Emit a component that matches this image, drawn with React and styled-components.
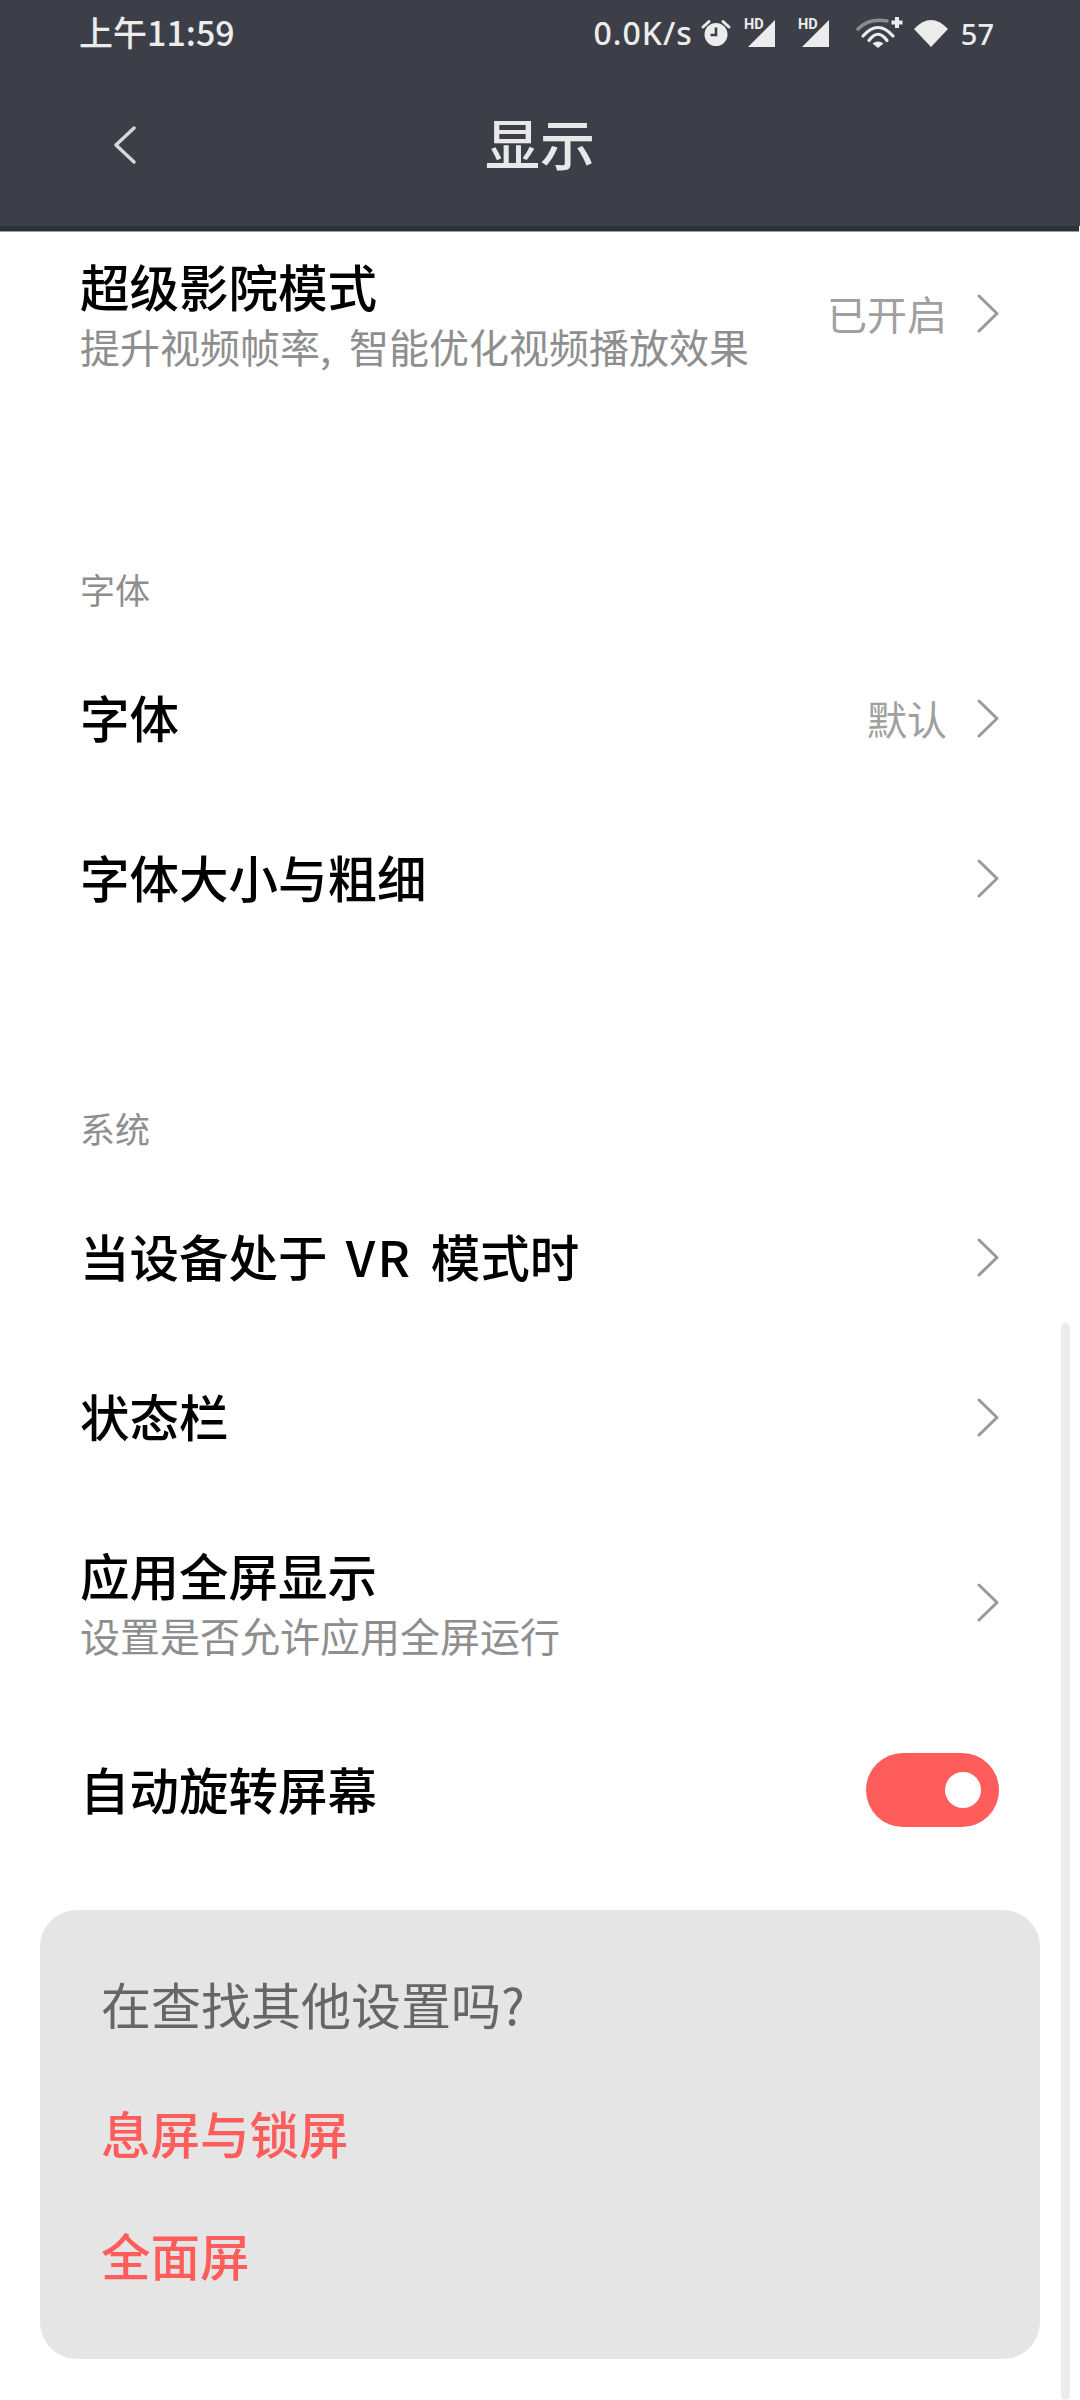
import React from "react";
import styled, { createGlobalStyle } from "styled-components";

const Global = createGlobalStyle`
  html, body { margin: 0; padding: 0; background: #fff; }
  body { font-family: "Noto Sans CJK SC", "Noto Sans", sans-serif; }
`;
const Page = styled.div`
  position: relative;
  width: 1080px;
  height: 2400px;
  overflow: hidden;
  background: #fff;
`;
const Header = styled.header`
  height: 226px;
  background: #3c3f48;
  display: flex;
  flex-direction: column;
`;
const HeaderEdge = styled.div`
  height: 5px;
  margin-right: 1px;
  background: #2a3339;
  border-bottom: 1px solid #9aa0a0;
`;
const StatusBar = styled.div`
  height: 66px;
  display: flex;
  align-items: center;
  padding: 0 86px 0 79px;
  color: #ececec;
`;
const Clock = styled.span`
  font-size: 34px;
  font-weight: 500;
  line-height: 1;
  margin-bottom: 2px;
`;
const StatusRight = styled.div`
  margin-left: auto;
  display: flex;
  align-items: center;
`;
const Speed = styled.span`
  font-family: "Noto Sans", sans-serif;
  font-size: 32px;
  font-weight: 500;
  letter-spacing: 1px;
  line-height: 1;
  margin-right: 9px;
`;
const Battery = styled.span`
  font-family: "Noto Sans", sans-serif;
  font-size: 29px;
  font-weight: 500;
  line-height: 1;
  margin-left: 13px;
`;
const StatusIcon = styled.svg`
  display: block;
  flex: none;
  overflow: visible;
  margin-left: ${(p) => p.$gap || 0}px;
`;
const NavBar = styled.div`
  position: relative;
  flex: 1;
  display: flex;
  align-items: center;
  justify-content: center;
  padding-bottom: 10px;
`;
const BackIcon = styled.svg`
  position: absolute;
  left: 113px;
  top: 60px;
`;
const Title = styled.h1`
  margin: 0;
  font-size: 55px;
  font-weight: 500;
  line-height: 1;
  color: #e8e8e8;
`;
const Row = styled.div`
  height: ${(p) => p.$h}px;
  display: flex;
  align-items: center;
  padding: 0 81px 0 80px;
`;
const RowText = styled.div`
  flex: 1;
  min-width: 0;
  display: flex;
  flex-direction: column;
  padding-bottom: 3px;
`;
const TwoLineText = styled(RowText)`
  padding: 6px 0 0;
`;
const RowTitle = styled.div`
  font-size: 49.5px;
  font-weight: 500;
  line-height: 61px;
  word-spacing: 7px;
  color: #000;
`;
const LatinWord = styled.span`
  letter-spacing: 2.5px;
`;
const RowSub = styled.div`
  font-size: 40px;
  line-height: 61px;
  word-spacing: 9px;
  color: #8e8e8e;
`;
const RowValue = styled.span`
  font-size: 40px;
  line-height: 1;
  color: #a0a0a0;
  margin-right: 30px;
`;
const Chevron = styled.svg`
  display: block;
  flex: none;
`;
const SectionLabel = styled.div`
  height: 60px;
  margin-top: ${(p) => p.$top}px;
  margin-bottom: 19px;
  padding-left: 80px;
  font-size: 35px;
  line-height: 60px;
  color: #8e8e8e;
`;
const Toggle = styled.div`
  width: 133px;
  height: 74px;
  border-radius: 37px;
  background: #ff5c5c;
  display: flex;
  align-items: center;
  justify-content: flex-end;
  padding-right: 18px;
  box-sizing: border-box;
`;
const Knob = styled.div`
  width: 36px;
  height: 36px;
  border-radius: 50%;
  background: #fff;
`;
const Card = styled.section`
  margin: 37px 40px 0;
  height: 449px;
  box-sizing: border-box;
  padding: 63px 61px 0;
  border-radius: 37px;
  background: #e5e5e5;
  display: flex;
  flex-direction: column;
`;
const CardTitle = styled.div`
  font-size: 50px;
  line-height: 60px;
  color: #666;
  margin-bottom: 70px;
`;
const CardLink = styled.div`
  font-size: 49.5px;
  font-weight: 500;
  line-height: 60px;
  color: #ff5c5c;
  margin-bottom: 62px;
`;
const Scrollbar = styled.div`
  position: absolute;
  left: 1061px;
  top: 1323px;
  bottom: 0;
  width: 9px;
  border-radius: 5px;
  background: #ececec;
`;

const ChevronRight = () => (
  <Chevron width="22" height="39" viewBox="0 0 22 39">
    <path d="M2 2 L20 19.5 L2 37" fill="none" stroke="#999" strokeWidth="3" strokeLinecap="round" strokeLinejoin="round" />
  </Chevron>
);

const Signal = ({ gap }) => (
  <StatusIcon $gap={gap} width="31" height="30" viewBox="0 0 31 30">
    <text x="0" y="10.5" fontFamily="Roboto, sans-serif" fontWeight="700" fontSize="14.5" fill="#ececec">HD</text>
    <path d="M31 2 V29 H4 Z" fill="#ececec" />
  </StatusIcon>
);

export default function App() {
  return (
    <Page>
      <Global />
      <Header>
        <StatusBar>
          <Clock>上午11:59</Clock>
          <StatusRight>
            <Speed>0.0K/s</Speed>
            <StatusIcon width="28" height="28" viewBox="0 0 28 28">
              <circle cx="14" cy="15.5" r="11.5" fill="#ececec" />
              <path d="M14 8.5 V16 H8.5" fill="none" stroke="#3c3f48" strokeWidth="2.6" />
              <path d="M1 8 L7 2.5 M27 8 L21 2.5" stroke="#ececec" strokeWidth="3" strokeLinecap="round" />
            </StatusIcon>
            <Signal gap={14} />
            <Signal gap={23} />
            <StatusIcon $gap={28} width="46" height="30" viewBox="0 0 46 30">
              <path d="M1 11 C9 3 20 1 30 3" fill="none" stroke="#8a8c92" strokeWidth="3.6" strokeLinecap="round" />
              <path d="M6 18 Q21 1 36 18" fill="none" stroke="#ececec" strokeWidth="3.2" strokeLinecap="round" />
              <path d="M12 22.5 Q21 10 30 22.5" fill="none" stroke="#ececec" strokeWidth="3.2" strokeLinecap="round" />
              <path d="M21 30 L15.5 25.5 Q21 21.5 26.5 25.5 Z" fill="#ececec" />
              <path d="M40 -1 V10 M34.5 4.5 H45.5" stroke="#ececec" strokeWidth="4" />
            </StatusIcon>
            <StatusIcon $gap={11} width="34" height="27" viewBox="0 0 34 27">
              <path d="M17 27 L0 9 Q17 -9 34 9 Z" fill="#ececec" />
            </StatusIcon>
            <Battery>57</Battery>
          </StatusRight>
        </StatusBar>
        <NavBar>
          <BackIcon width="24" height="38" viewBox="0 0 24 38">
            <path d="M21 2 L3 19 L21 36" fill="none" stroke="#d8d8d8" strokeWidth="3.4" strokeLinecap="round" strokeLinejoin="round" />
          </BackIcon>
          <Title>显示</Title>
        </NavBar>
      </Header>
      <HeaderEdge />

      <Row $h={162}>
        <TwoLineText>
          <RowTitle>超级影院模式</RowTitle>
          <RowSub>提升视频帧率, 智能优化视频播放效果</RowSub>
        </TwoLineText>
        <RowValue>已开启</RowValue>
        <ChevronRight />
      </Row>

      <SectionLabel $top={165}>字体</SectionLabel>
      <Row $h={160}>
        <RowText><RowTitle>字体</RowTitle></RowText>
        <RowValue>默认</RowValue>
        <ChevronRight />
      </Row>
      <Row $h={160}>
        <RowText><RowTitle>字体大小与粗细</RowTitle></RowText>
        <ChevronRight />
      </Row>

      <SectionLabel $top={140}>系统</SectionLabel>
      <Row $h={160}>
        <RowText><RowTitle>当设备处于 <LatinWord>VR</LatinWord> 模式时</RowTitle></RowText>
        <ChevronRight />
      </Row>
      <Row $h={160}>
        <RowText><RowTitle>状态栏</RowTitle></RowText>
        <ChevronRight />
      </Row>
      <Row $h={210}>
        <TwoLineText>
          <RowTitle>应用全屏显示</RowTitle>
          <RowSub>设置是否允许应用全屏运行</RowSub>
        </TwoLineText>
        <ChevronRight />
      </Row>
      <Row $h={166}>
        <RowText><RowTitle>自动旋转屏幕</RowTitle></RowText>
        <Toggle><Knob /></Toggle>
      </Row>

      <Card>
        <CardTitle>在查找其他设置吗?</CardTitle>
        <CardLink>息屏与锁屏</CardLink>
        <CardLink>全面屏</CardLink>
      </Card>
      <Scrollbar />
    </Page>
  );
}
